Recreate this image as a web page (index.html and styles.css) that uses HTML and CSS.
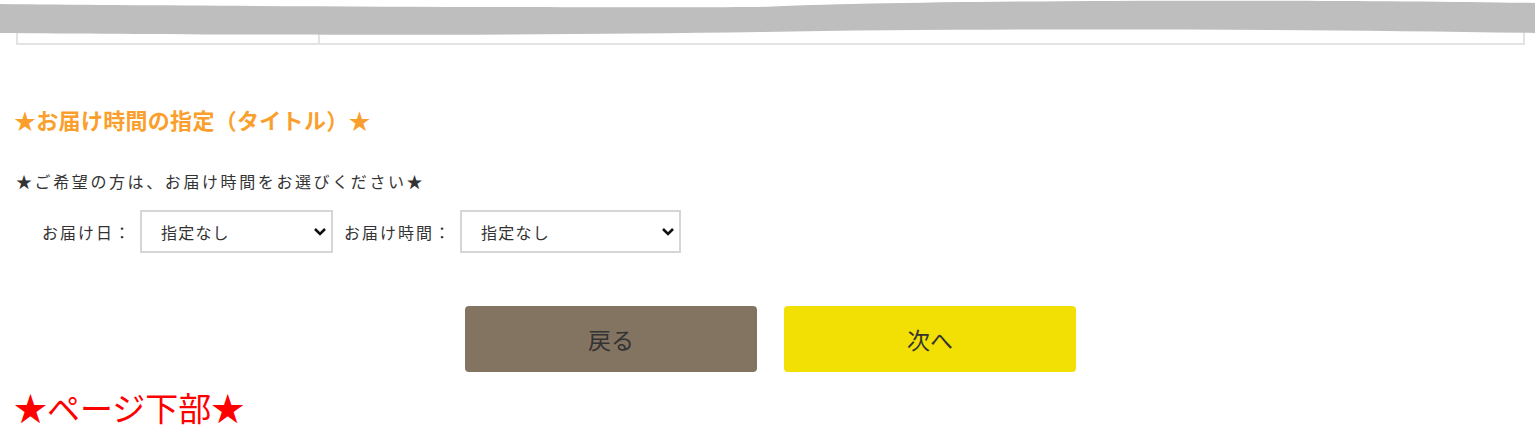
FILE: index.html
```html
<!DOCTYPE html>
<html lang="ja">
<head>
	<meta charset="UTF-8" />
	<meta name="viewport" content="width=device-width, initial-scale=1.0" />
	<title>お届け時間の指定</title>
	<link rel="stylesheet" href="styles.css">
</head>
<body>
	<div class="page">
		<div class="top-table-wrap">
			<table class="info-table">
				<tr>
					<td class="col-head"></td>
					<td></td>
				</tr>
			</table>
			<svg class="mask" viewBox="0 0 1535 40" preserveAspectRatio="none">
				<path d="M0,0 L1535,0 L1535,3 C1300,-1 900,0 760,7 C600,8 200,6 0,4 Z" fill="#fff"/>
				<path d="M0,4 C200,6 600,8 760,7 C900,0 1300,-1 1535,3 L1535,33 C1300,29 1000,28 760,32 C500,36 200,35 0,33 Z" fill="#bebebe"/>
			</svg>
		</div>

		<h2 class="section-title">★お届け時間の指定（タイトル）★</h2>
		<p class="lead">★ご希望の方は、お届け時間をお選びください★</p>

		<div class="delivery-row">
			<label for="deliveryDate">お届け日：</label>
			<div class="select-box date">
				<select id="deliveryDate">
					<option value="">指定なし</option>
				</select>
				<svg class="chevron" viewBox="0 0 14 9"><path d="M2 2 L7 7 L12 2" fill="none" stroke="#111" stroke-width="2.6"/></svg>
			</div>
			<label for="deliveryTime">お届け時間：</label>
			<div class="select-box time">
				<select id="deliveryTime">
					<option value="">指定なし</option>
				</select>
				<svg class="chevron" viewBox="0 0 14 9"><path d="M2 2 L7 7 L12 2" fill="none" stroke="#111" stroke-width="2.6"/></svg>
			</div>
		</div>

		<div class="buttons">
			<button class="btn btn-back">戻る</button>
			<button class="btn btn-next">次へ</button>
		</div>

		<p class="page-bottom">★ページ下部★</p>
	</div>
</body>
</html>
```

FILE: styles.css
```css
body {
	margin: 0;
	font-family: "Noto Sans CJK JP", "Noto Sans", sans-serif;
	color: #333;
	background-color: #fff;
}
.page {
	padding: 0 10px 0 16px;
}
/* 上部の表（グレーの帯で隠れている） */
.top-table-wrap {
	position: relative;
	margin-top: -20px;
}
.info-table {
	width: 100%;
	border-collapse: collapse;
}
.info-table td {
	height: 61px;
	border: 2px solid #e3e3e3;
	padding: 0;
}
.info-table td.col-head {
	width: 300px;
}
.mask {
	position: absolute;
	top: 20px;
	left: -16px;
	width: 1535px;
	height: 40px;
}
.section-title {
	margin: 58px 0 0 -2px;
	font-size: 22px;
	line-height: 32px;
	font-weight: bold;
	letter-spacing: 0.3px;
	color: #fa9f2c;
}
.lead {
	margin: 34px 0 0 0;
	font-size: 16px;
	line-height: 24px;
	letter-spacing: 2.6px;
}
.delivery-row {
	display: flex;
	align-items: center;
	margin: 17px 0 0 26px;
}
.delivery-row label {
	font-size: 16px;
	letter-spacing: 2px;
	margin-right: 8px;
}
.select-box {
	position: relative;
	margin-right: 11px;
}
.select-box select {
	appearance: none;
	-webkit-appearance: none;
	height: 43px;
	border: 2px solid #d6d6d6;
	border-radius: 0;
	background-color: #fff;
	padding: 0 0 0 19px;
	font-family: inherit;
	font-size: 16px;
	letter-spacing: 1.2px;
	color: #333;
}
.select-box.date select {
	width: 193px;
}
.select-box.time select {
	width: 221px;
}
.chevron {
	position: absolute;
	right: 6px;
	top: 17px;
	width: 14px;
	height: 9px;
	pointer-events: none;
}
.buttons {
	display: flex;
	justify-content: center;
	gap: 27px;
	margin-top: 53px;
}
.btn {
	width: 292px;
	height: 66px;
	border: none;
	border-radius: 4px;
	font-family: inherit;
	font-size: 23px;
	color: #333;
	cursor: pointer;
}
.btn-back {
	background-color: #837462;
}
.btn-next {
	background-color: #f2e005;
}
.page-bottom {
	margin: 15px 0 0 -2px;
	font-size: 33px;
	line-height: 40px;
	color: #ff0000;
}
```
